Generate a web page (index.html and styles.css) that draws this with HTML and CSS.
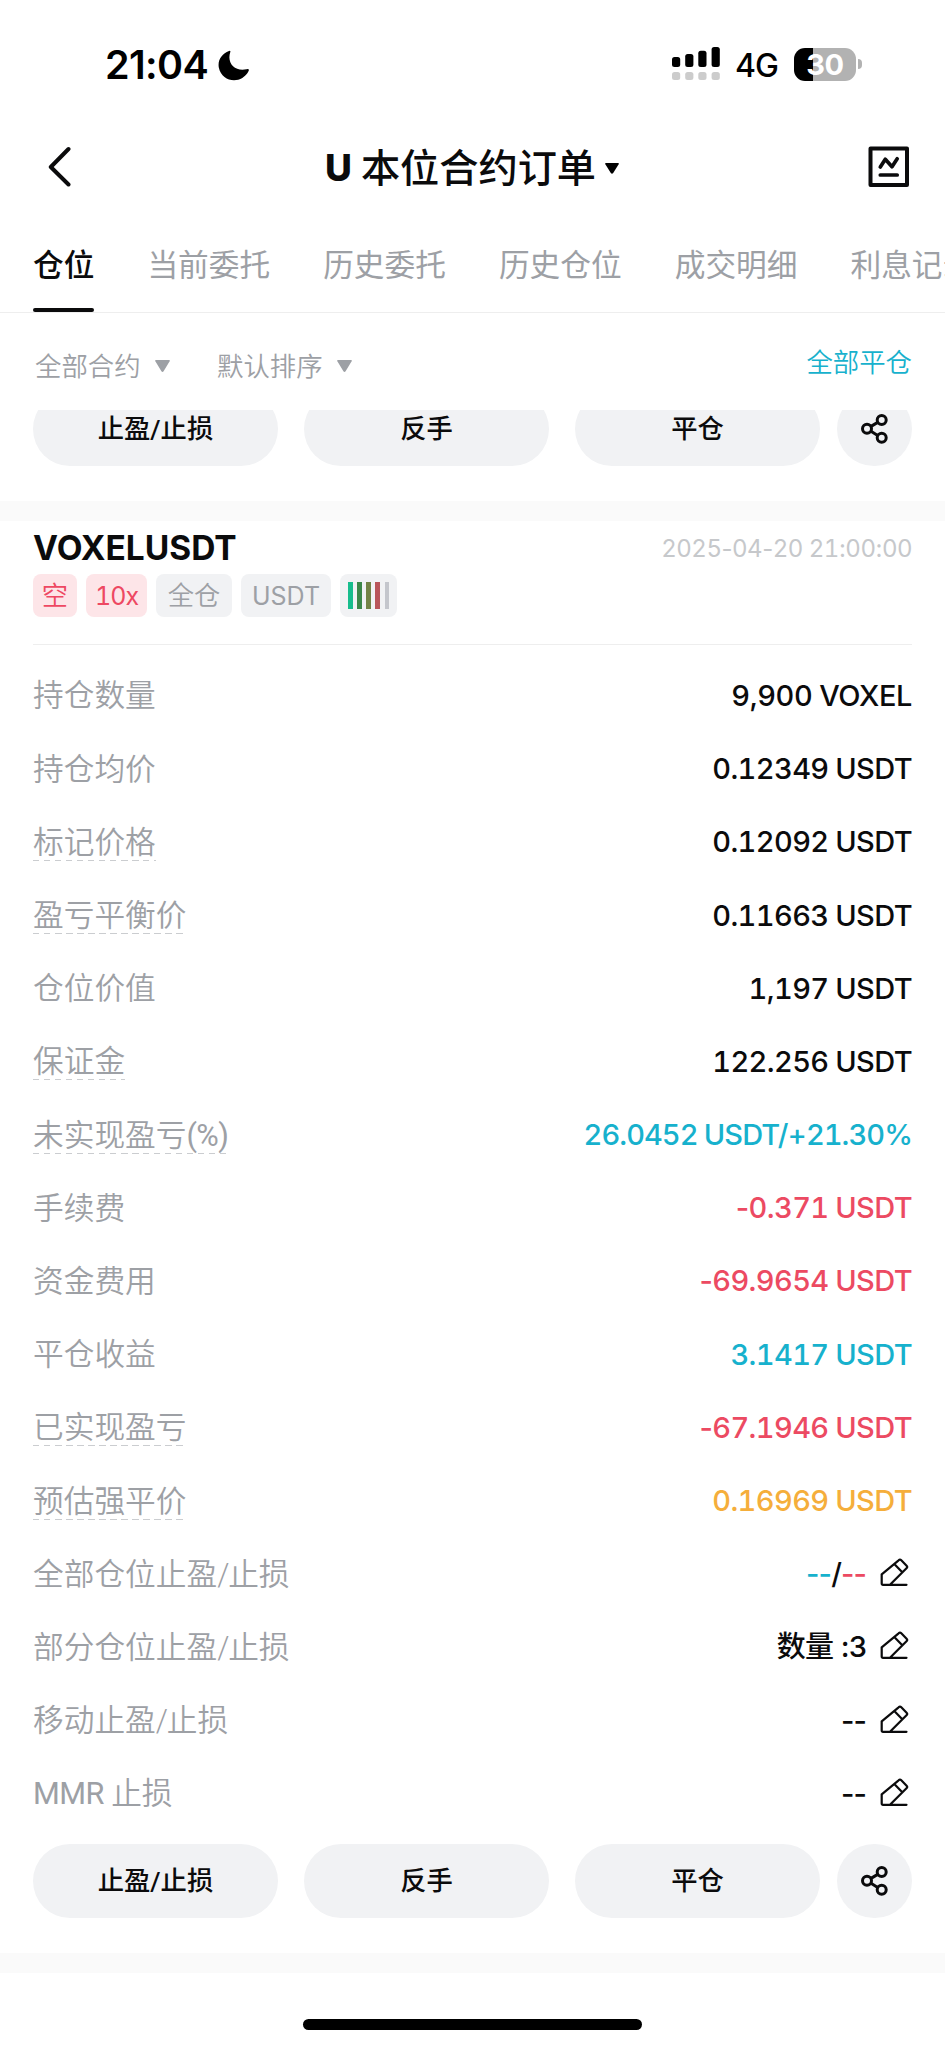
FILE: index.html
```html
<!DOCTYPE html>
<html lang="zh-CN">
<head>
<meta charset="utf-8">
<title>U 本位合约订单</title>
<link rel="stylesheet" href="styles.css">
</head>
<body>
<svg class="defs" width="0" height="0">
  <symbol id="edit" viewBox="0 0 29 29"><path d="M1.7 16.3 18.6 2.3Q20 1 21.3 2.3L26.6 7.8Q27.8 9 26.5 10.3L10 26.8M26.5 26.8H3Q1.7 26.8 1.7 25.5V16.3M15 6.8 22.3 14.3" fill="none" stroke="#0b0b0c" stroke-width="2.2" stroke-linecap="round" stroke-linejoin="round"/></symbol>
  <symbol id="share" viewBox="0 0 27 30"><g fill="none" stroke="#0b0b0c" stroke-width="3"><circle cx="6" cy="14.8" r="4.5"/><circle cx="20.7" cy="6" r="4.5"/><circle cx="20.7" cy="23.8" r="4.5"/><path d="M10 12.4 16.7 8.4M10 17.2 16.7 21.4"/></g></symbol>
</svg>
<div class="screen">
  <header class="status">
    <span class="clock">21:04</span>
    <svg class="moon" width="32" height="31" viewBox="0 0 32 31"><path d="M11 1Q12.800 0 12.300 2C8.500 13 17 22 28.500 19.300Q31.600 18.300 30.600 21C24 34.500 4 33 .8 17.500C-.5 10 4 3.500 11 1Z"/></svg>
    <svg class="signal" width="49" height="34" viewBox="0 0 49 34"><g><rect y="10" width="8.200" height="10" rx="2.500"/><rect x="13.200" y="7" width="8.200" height="13" rx="2.500"/><rect x="26.300" y="3.700" width="8.200" height="16.300" rx="2.500"/><rect x="39.600" width="8.200" height="20" rx="2.500"/></g><g fill="#ccc"><rect y="25" width="8.200" height="8" rx="2.500"/><rect x="13.200" y="25" width="8.200" height="8" rx="2.500"/><rect x="26.300" y="25" width="8.200" height="8" rx="2.500"/><rect x="39.600" y="25" width="8.200" height="8" rx="2.500"/></g></svg>
    <span class="net">4G</span>
    <span class="battery">30</span><i class="nub"></i>
  </header>
  <div class="nav">
    <svg class="back" width="24" height="42" viewBox="0 0 24 42"><path d="M20.500 3 2.800 21 20.500 38.500" fill="none" stroke="#0b0b0c" stroke-width="4" stroke-linecap="round" stroke-linejoin="round"/></svg>
    <h1 class="title"><b>U</b><span>本位合约订单</span><svg width="14" height="11" viewBox="0 0 14 11"><path d="M1 0H13Q14.500.3 13.500 1.600L8.200 10Q7 11.500 5.800 10L.5 1.600Q-.5.3 1 0Z"/></svg></h1>
    <svg class="chart" width="42" height="42" viewBox="0 0 42 42"><g fill="none" stroke="#0b0b0c" stroke-width="4" stroke-linejoin="round" stroke-linecap="round"><rect x="2.500" y="2.500" width="36.500" height="36.500"/><path d="M12.300 21 17.300 13.300 24 20.700 29.200 12.800M12.300 29H29.200" stroke-width="3.700"/></g></svg>
  </div>
  <nav class="tabs"><span class="tab active">仓位</span><span class="tab">当前委托</span><span class="tab">历史委托</span><span class="tab">历史仓位</span><span class="tab">成交明细</span><span class="tab">利息记录</span></nav>
  <div class="filters">
    <span class="filter">全部合约<svg width="15" height="12" viewBox="0 0 15 12"><path d="M1 0H14Q15.500.3 14.500 1.600L8.600 11.300Q7.500 12.500 6.400 11.300L.5 1.600Q-.5.3 1 0Z"/></svg></span>
    <span class="filter">默认排序<svg width="15" height="12" viewBox="0 0 15 12"><path d="M1 0H14Q15.500.3 14.500 1.600L8.600 11.300Q7.500 12.500 6.400 11.300L.5 1.600Q-.5.3 1 0Z"/></svg></span>
    <span class="closeall">全部平仓</span>
  </div>
  <div class="clip"><div class="actions"><button>止盈/止损</button><button>反手</button><button>平仓</button><button class="round"><svg width="27" height="30"><use href="#share"/></svg></button></div></div>
  <div class="band"></div>
  <section class="card">
    <div class="head"><strong>VOXELUSDT</strong><time>2025<s>-</s>04<s>-</s>20 21<s>:</s>00<s>:</s>00</time></div>
    <div class="tags"><span class="tag red short">空</span><span class="tag red lev">10x</span><span class="tag mode">全仓</span><span class="tag coin">USDT</span><span class="tag bars"><i class="b1"></i><i class="b2"></i><i class="b3"></i><i class="b4"></i><i class="b5"></i></span></div>
    <dl class="rows">
      <div class="row"><dt>持仓数量</dt><dd class="qty">9,900 VOXEL</dd></div>
      <div class="row"><dt>持仓均价</dt><dd>0.12349 USDT</dd></div>
      <div class="row"><dt class="tip">标记价格</dt><dd>0.12092 USDT</dd></div>
      <div class="row"><dt class="tip">盈亏平衡价</dt><dd>0.11663 USDT</dd></div>
      <div class="row"><dt>仓位价值</dt><dd>1,197 USDT</dd></div>
      <div class="row"><dt class="tip">保证金</dt><dd>122.256 USDT</dd></div>
      <div class="row"><dt class="tip">未实现盈亏<span class="lat">(%)</span></dt><dd class="up pnl">26.0452 USDT/<s>+</s>21.30%</dd></div>
      <div class="row"><dt>手续费</dt><dd class="down"><s>-</s>0.371 USDT</dd></div>
      <div class="row"><dt>资金费用</dt><dd class="down"><s>-</s>69.9654 USDT</dd></div>
      <div class="row"><dt>平仓收益</dt><dd class="up">3.1417 USDT</dd></div>
      <div class="row"><dt class="tip">已实现盈亏</dt><dd class="down"><s>-</s>67.1946 USDT</dd></div>
      <div class="row"><dt class="tip">预估强平价</dt><dd class="warn">0.16969 USDT</dd></div>
      <div class="row"><dt>全部仓位止盈<span class="slash">/</span>止损</dt><dd class="edit"><span class="up">--</span>/<span class="down">--</span><svg class="pen" width="29" height="29"><use href="#edit"/></svg></dd></div>
      <div class="row"><dt>部分仓位止盈<span class="slash">/</span>止损</dt><dd class="edit">数量 :3<svg class="pen" width="29" height="29"><use href="#edit"/></svg></dd></div>
      <div class="row"><dt>移动止盈<span class="slash">/</span>止损</dt><dd class="edit">--<svg class="pen" width="29" height="29"><use href="#edit"/></svg></dd></div>
      <div class="row"><dt><span class="lat">MMR</span> 止损</dt><dd class="edit">--<svg class="pen" width="29" height="29"><use href="#edit"/></svg></dd></div>
    </dl>
    <div class="actions"><button>止盈/止损</button><button>反手</button><button>平仓</button><button class="round"><svg width="27" height="30"><use href="#share"/></svg></button></div>
  </section>
  <div class="band"></div>
  <div class="home"></div>
</div>
</body>
</html>
```
FILE: styles.css
```css
* { box-sizing: border-box; margin: 0; padding: 0; }
body { background: #fff; color: #0b0b0c; font-family: Inter, "Noto Sans CJK SC", sans-serif; }
.defs { display: block; position: absolute; }
.screen { width: 945px; height: 2048px; overflow: hidden; display: flex; flex-direction: column; }
.status { height: 128px; padding: 0 83px 0 105px; display: flex; align-items: center; flex: none; color: #000; }
.clock { font-size: 39.5px; font-weight: 600; line-height: 40px; width: 113px; padding-top: 1px; letter-spacing: -0.6px; }
.moon { margin-top: 2px; }
.signal { margin-left: auto; }
.net { font-size: 32px; font-weight: 500; line-height: 40px; width: 59px; margin-left: 14px; margin-top: 3px; letter-spacing: -1px; }
.battery { width: 62px; height: 33px; border-radius: 11px; background: linear-gradient(90deg, #000 19px, #b2b2b2 19px); color: #fff; font-size: 29px; font-weight: 700; line-height: 33px; text-align: center; letter-spacing: -0.5px; }
.nub { width: 4px; height: 10px; margin-left: 2px; border-radius: 0 5px 5px 0; background: #b2b2b2; }
.nav { height: 78px; padding: 0 35px 0 48px; display: flex; align-items: center; justify-content: space-between; flex: none; }
.title { display: flex; align-items: center; font-size: 39.2px; line-height: 50px; font-weight: 500; padding: 2px 0 0 4px; }
.title b { font-size: 37px; font-weight: 800; margin-right: 9px; }
.title svg { margin: 1px 0 0 9px; }
.tabs { height: 107px; padding-left: 33px; display: flex; gap: 53px; border-bottom: 1px solid #eee; flex: none; }
.tab { flex: none; font-size: 30.7px; line-height: 117px; color: #9da0a5; height: 106px; }
.active { color: #0b0b0c; font-weight: 500; display: flex; flex-direction: column; }
.active::after { content: ""; height: 4.500px; margin-top: -15px; border-radius: 2px; background: #0b0b0c; }
.filters { height: 97px; padding: 0 33px 0 35px; display: flex; align-items: center; flex: none; font-size: 26.4px; line-height: 40px; font-weight: 350; color: #9da0a5; }
.filter { display: flex; align-items: center; margin: 8px 47px 0 0; }
.filter svg { margin: 1px 0 0 14.500px; fill: #9da0a5; }
.closeall { margin-left: auto; color: #17b1cd; }
.clip { height: 91px; overflow: hidden; padding: 0 33px; display: flex; align-items: flex-start; flex: none; }
.clip .actions { margin-top: -18.500px; }
.actions { width: 879px; height: 74.500px; display: flex; flex: none; }
.actions button { width: 245px; margin-right: 26px; border: 0; border-radius: 38px; background: #f1f2f4; color: #0b0b0c; font: 500 26.3px/75px Roboto, "Noto Sans CJK SC", sans-serif; }
.actions button:nth-child(3) { margin-right: 17px; }
.actions .round { width: 75px; margin: 0; display: flex; align-items: center; justify-content: center; }
.band { height: 20px; background: #fafafa; flex: none; }
.card { height: 1432px; padding: 0 33px; flex: none; }
s { text-decoration: none; font-variant-numeric: normal; }
.head { height: 53px; display: flex; justify-content: space-between; align-items: center; }
.head strong { font-size: 33.5px; font-weight: 700; }
.head time { font-size: 24px; letter-spacing: -0.5px; color: #c6c8cb; font-variant-numeric: tabular-nums; padding-top: 2px; }
.tags { height: 71px; display: flex; gap: 9px; border-bottom: 1px solid #eee; }
.tag { height: 43px; border-radius: 8px; background: #f1f2f4; color: #9da0a5; font-size: 26.3px; line-height: 44px; text-align: center; font-weight: 350; }
.red { background: #fde5e8; color: #ee4862; }
.short { width: 44px; }
.lev { width: 61px; font-size: 25px; font-weight: 400; font-variant-numeric: tabular-nums; letter-spacing: -1px; line-height: 45px; }
.mode { width: 76px; }
.coin { width: 90px; font-size: 25px; font-weight: 400; line-height: 45px; }
.bars { width: 57px; display: flex; padding: 8px 8px; justify-content: space-between; }
.bars i { width: 4.500px; }
.b1 { background: #17bd8d; } .b2 { background: #3c8749; } .b3 { background: #738346; } .b4 { background: #b9555a; } .b5 { background: #c4c6cc; }
.rows { padding-top: 13.400px; height: 1198.500px; }
.row { height: 73.200px; display: flex; align-items: center; justify-content: space-between; }
.row dt { font-family: Roboto, "Noto Sans CJK SC", sans-serif; font-size: 30.7px; line-height: 36px; padding-top: 3px; font-weight: 350; color: #9da0a5; }
.lat { font-weight: 400; letter-spacing: -0.6px; }
.slash { letter-spacing: -1.2px; }
.tip { background: repeating-linear-gradient(90deg, #cbcdd0 0 6.500px, transparent 6.500px 11px) 0 100% / 100% 1px no-repeat; }
.row dd { display: flex; align-items: center; padding-top: 2px; font-size: 29px; line-height: 40px; font-weight: 500; font-variant-numeric: tabular-nums; letter-spacing: -0.6px; word-spacing: -0.5px; white-space: pre; }
.up { color: #17b1cd; } .down { color: #ec4a62; } .row dd.warn { color: #f5ae3b; }
.row dd.qty { letter-spacing: -0.4px; }
.row dd.pnl { letter-spacing: -0.95px; }
.row dd.edit { font-variant-numeric: normal; letter-spacing: -0.9px; word-spacing: 1px; }
.pen { margin: -3px 3px 0 14px; }
.home { width: 339px; height: 11px; border-radius: 6px; background: #000; margin: 46px 0 0 303px; flex: none; }
```
